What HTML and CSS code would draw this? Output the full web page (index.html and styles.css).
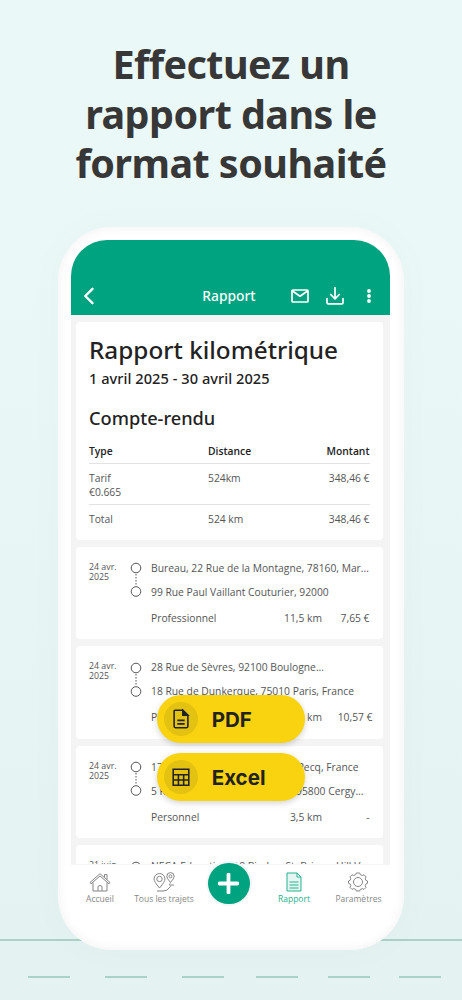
FILE: index.html
```html
<!DOCTYPE html>
<html lang="fr">
<head>
<meta charset="utf-8">
<title>Rapport</title>
<link rel="stylesheet" href="styles.css">
</head>
<body>
<svg class="road" viewBox="0 0 462 80" aria-hidden="true">
  <path d="M0 20H462M28 57H70M105 57H147M182 57H224M256 57H298M328 57H370M399 57H441" stroke="#a9d3c8" stroke-width="2" fill="none"/>
</svg>
<h1 class="headline"><span>Effectuez un</span><span>rapport dans le</span><span>format souhaité</span></h1>
<main class="phone">
  <div class="screen">
    <header class="topbar">
      <svg class="back" viewBox="0 0 12 18"><path d="M9.500 1.800L2.300 9L9.500 16.200"/></svg>
      <span class="topbar-title">Rapport</span>
      <svg class="mail" viewBox="0 0 18 14"><rect x="1" y="1" width="16" height="12" rx="1"/><path d="M1.500 2L9 7.200L16.500 2"/></svg>
      <svg class="download" viewBox="0 0 18 18"><path d="M9 .8V11.500M4.700 7.500L9 11.800L13.300 7.500M1 11.500V15.700Q1 16.900 2.200 16.900H15.800Q17 16.900 17 15.700V11.500"/></svg>
      <svg class="dots" viewBox="0 0 4 14"><circle cx="2" cy="2" r="1.900"/><circle cx="2" cy="7" r="1.900"/><circle cx="2" cy="12" r="1.900"/></svg>
    </header>
    <div class="feed">
      <section class="card summary">
        <h2>Rapport kilométrique</h2>
        <p class="period">1 avril 2025 - 30 avril 2025</p>
        <h3>Compte-rendu</h3>
        <div class="row head"><span>Type</span><span>Distance</span><span>Montant</span></div>
        <div class="row"><span>Tarif<br>€0.665</span><span>524km</span><span>348,46 €</span></div>
        <div class="row last"><span>Total</span><span>524 km</span><span>348,46 €</span></div>
      </section>
      <section class="card trip">
        <div class="date">24 avr.<br>2025</div>
        <svg class="stops" viewBox="0 0 12 36"><circle cx="6" cy="6" r="4.800"/><circle cx="6" cy="29.500" r="4.800"/><path d="M6 12V24"/></svg>
        <div class="info"><p>Bureau, 22 Rue de la Montagne, 78160, Mar...</p><p>99 Rue Paul Vaillant Couturier, 92000</p>
          <div class="meta"><span>Professionnel</span><span class="km">11,5 km</span><span class="eur">7,65 €</span></div></div>
      </section>
      <section class="card trip">
        <div class="date">24 avr.<br>2025</div>
        <svg class="stops" viewBox="0 0 12 36"><circle cx="6" cy="6" r="4.800"/><circle cx="6" cy="29.500" r="4.800"/><path d="M6 12V24"/></svg>
        <div class="info"><p>28 Rue de Sèvres, 92100 Boulogne...</p><p>18 Rue de Dunkerque, 75010 Paris, France</p>
          <div class="meta wide"><span>Professionnel</span><span class="km">15,9 km</span><span class="eur">10,57 €</span></div></div>
      </section>
      <section class="card trip">
        <div class="date">24 avr.<br>2025</div>
        <svg class="stops" viewBox="0 0 12 36"><circle cx="6" cy="6" r="4.800"/><circle cx="6" cy="29.500" r="4.800"/><path d="M6 12V24"/></svg>
        <div class="info"><p class="split"><span>17 Rue</span><span class="end-a">Le Pecq, France</span></p><p class="split"><span>5 Rue</span><span class="end-b">95800 Cergy...</span></p>
          <div class="meta"><span>Personnel</span><span class="km">3,5 km</span><span class="eur">-</span></div></div>
      </section>
      <section class="card trip">
        <div class="date">21 juin<br>2025</div>
        <svg class="stops" viewBox="0 0 12 36"><circle cx="6" cy="6" r="4.800"/><circle cx="6" cy="29.500" r="4.800"/><path d="M6 12V24"/></svg>
        <div class="info"><p>NECA Education, 18 Bimber St. Briove, Hill V...</p></div>
      </section>
      <div class="formats">
        <button class="format"><span class="disc"><svg viewBox="0 0 24 24"><path d="M5.500 2.500H14L19.500 8V20Q19.500 21.500 18 21.500H6Q4.500 21.500 4.500 20V3.500Q4.500 2.500 5.500 2.500Z"/><path d="M14 2.500V8H19.500Z" class="fold"/><path d="M8 13.500H16M8 17.300H16"/></svg></span><span class="format-name">PDF</span></button>
        <button class="format"><span class="disc"><svg viewBox="0 0 24 24"><path d="M3.500 3.500H20.500V21H3.500ZM3.500 9.500H20.500M3.500 15.200H20.500M9.200 9.500V21M14.900 9.500V21"/></svg></span><span class="format-name">Excel</span></button>
      </div>
    </div>
    <nav class="tabs">
      <a class="tab t1"><svg viewBox="0 0 22 20"><path d="M1 10.500L11 1.700L21 10.500L20 11.800L11 4L2 11.800ZM4 10.500V19H18V10.500M15.500 5V2.500H18V7.500M9 19V15Q9 13.500 11 13.500Q13 13.500 13 15V19"/></svg><span>Accueil</span></a>
      <a class="tab t2"><svg viewBox="0 0 22 20"><path d="M6.500 16Q1 9.500 1 7A5.500 5.500 0 0 1 12 7Q12 9.500 6.500 16ZM17.500 10.500Q13.800 6.300 13.800 4.300A3.700 3.700 0 0 1 21.200 4.300Q21.200 6.300 17.500 10.500ZM17.500 11.500Q15 12.500 17 13.200T16 16Q14.500 19 10 19H4M17.500 13H21"/><circle cx="6.500" cy="7" r="2.700"/><circle cx="17.500" cy="4.300" r="1.500"/></svg><span>Tous les trajets</span></a>
      <a class="fab"><svg viewBox="0 0 20 20"><path d="M10 1.500V18.500M1.500 10H18.500"/></svg></a>
      <a class="tab t3"><svg viewBox="0 0 22 20"><path class="paper" d="M4 1H14L18 5V19H4ZM14 1V5H18M6.500 10H15.500M6.500 13H15.500M6.500 16H15.500"/></svg><span>Rapport</span></a>
      <a class="tab t4"><svg viewBox="0 0 22 20"><path d="M9.300 1H12.700L13.300 2.700L15.300 3.500L17 2.700L19 4.900L18.200 6.700L18.900 8.300L20.500 9V11.300L18.900 12L18.200 13.600L19 15.400L17 17.400L15.300 16.600L13.300 17.400L12.700 19H9.300L8.700 17.400L6.700 16.600L5 17.400L3 15.400L3.800 13.600L3.100 12L1.500 11.300V9L3.100 8.300L3.800 6.700L3 4.900L5 2.700L6.700 3.500L8.700 2.700Z"/><circle cx="11" cy="10" r="4.500"/></svg><span>Paramètres</span></a>
    </nav>
  </div>
</main>
</body>
</html>
```
FILE: styles.css
```css
* { box-sizing: border-box; }
body {
  margin: 0;
  width: 462px;
  height: 1000px;
  overflow: hidden;
  position: relative;
  background: linear-gradient(#ebf8f8 0, #ebf8f8 24%, #e5f2f2 96%);
  font-family: "Open Sans", "Noto Sans", sans-serif;
}
h1, h2, h3, p { margin: 0; }
svg { display: block; fill: none; }
.road { position: absolute; left: 0; top: 920px; width: 462px; height: 80px; }
.headline {
  display: flex;
  flex-direction: column;
  align-items: center;
  padding-top: 40.300px;
  height: 227px;
  font: 700 39.500px/49.600px "Noto Sans", sans-serif;
  letter-spacing: -.550px;
  color: #373737;
}
.phone {
  position: relative;
  width: 346px;
  height: 723px;
  margin-left: 58px;
  padding: 13px 14px 0 13px;
  border-radius: 54px;
  background: #fff;
  box-shadow: inset 0 0 12px #f1f1f1, 0 0 30px rgba(80, 130, 130, .04);
}
.screen { display: flow-root; height: 685px; border-radius: 36px 36px 0 0; overflow: hidden; }
.topbar {
  height: 75px;
  padding: 37px 19px 0 12px;
  background: #00a380;
  color: #fff;
  display: flex;
  align-items: center;
}
.topbar svg { stroke: #fff; stroke-width: 1.700; flex: none; stroke-linecap: round; stroke-linejoin: round; }
.topbar .back { width: 12px; height: 18px; stroke-width: 2.400; }
.topbar-title { font: 500 13.800px/20px "Noto Sans", sans-serif; margin-left: 107.300px; width: 89px; }
.mail { width: 18px; height: 14px; }
.download { width: 18px; height: 18px; margin-left: 16.700px; }
.topbar .dots { width: 4px; height: 14px; margin-left: auto; fill: #fff; stroke: none; }
.feed {
  position: relative;
  height: 549px;
  overflow: hidden;
  padding: 7px 7px 0 4.500px;
  background: #f4f4f4;
  display: flex;
  flex-direction: column;
  gap: 6.800px;
}
.card { flex: none; background: #fff; border-radius: 4px; padding: 0 13.500px; color: #555; font-size: 10.300px; line-height: 14px; }
.summary { height: 218px; padding-top: 12px; }
.summary h2, .summary h3, .period { font-family: "Noto Sans", sans-serif; font-weight: 500; color: #222; }
.summary h2 { font-size: 24.300px; line-height: 32px; }
.period { font-size: 14.600px; letter-spacing: .040px; line-height: 20px; margin-top: 2px; }
.summary h3 { font-size: 18.200px; line-height: 24px; margin: 18px 0 14px; }
.row { display: grid; grid-template-columns: 119px 1fr auto; border-bottom: 1px solid #e3e3e3; padding: 7px 0 5px; }
.head { padding-top: 0; padding-bottom: 5px; font-weight: 600; color: #222; }
.last { border: 0; }
.trip { height: 92.700px; padding-top: 14px; display: flex; }
.date { font-size: 8.800px; line-height: 10.200px; width: 40.500px; padding-top: .900px; }
.stops { width: 12px; height: 36px; margin: 1.500px 9.500px 0 0; stroke: #555; stroke-width: 1; flex: none; }
.stops path { stroke-dasharray: 1.500 1.500; }
.info { flex: 1; min-width: 0; white-space: nowrap; }
.info p { height: 24px; }
.meta { display: flex; padding-top: 2px; }
.km { margin-left: auto; }
.eur { width: 47.500px; text-align: right; }
.wide { margin-right: -3px; }
.wide .eur { width: 50.500px; }
.split { display: flex; justify-content: space-between; }
.end-a { margin-right: 11px; }
.end-b { margin-right: 6px; }
.formats { position: absolute; left: 86px; top: 380px; display: flex; flex-direction: column; gap: 10.400px; }
.format {
  display: flex;
  align-items: center;
  width: 148px;
  height: 48px;
  padding: 0 0 0 6.700px;
  border: 0;
  border-radius: 24px;
  background: #f9d30f;
  box-shadow: 0 2px 6px rgba(0, 0, 0, .18);
  color: #222;
  font: 700 20.500px/24px Inter, sans-serif;
}
.format-name { padding-top: 1px; }
.disc { width: 34px; height: 34px; margin-right: 14px; border-radius: 50%; background: #e3c212; display: grid; place-items: center; }
.disc svg { width: 22px; height: 22px; stroke: #222; stroke-width: 1.700; }
.fold { fill: #222; }
.tabs { display: flex; height: 61px; background: #fff; border-top: 1px solid #f6f6f6; position: relative; font-size: 8.500px; line-height: 12px; color: #888; }
.tab { display: flex; flex: none; flex-direction: column; align-items: center; padding-top: 6.500px; white-space: nowrap; }
.tab svg { width: 22px; height: 20px; margin-bottom: 1px; stroke: #858585; stroke-width: 1; }
.t1 { width: 58px; }
.t2 { width: 70px; }
.t3 { width: 50px; color: #27b28f; }
.t3 svg { stroke: #27b28f; }
.t4 { width: 79px; margin-right: -8px; }
.paper { fill: #e5f6f2; }
.fab { width: 41.500px; height: 41.500px; margin: -2.500px 19.300px 0 9.200px; border-radius: 50%; background: #00a380; box-shadow: 0 0 0 2px #f5f6f6; display: grid; place-items: center; flex: none; }
.fab svg { width: 21px; height: 21px; stroke: #fff; stroke-width: 3.600; stroke-linecap: round; }
```
